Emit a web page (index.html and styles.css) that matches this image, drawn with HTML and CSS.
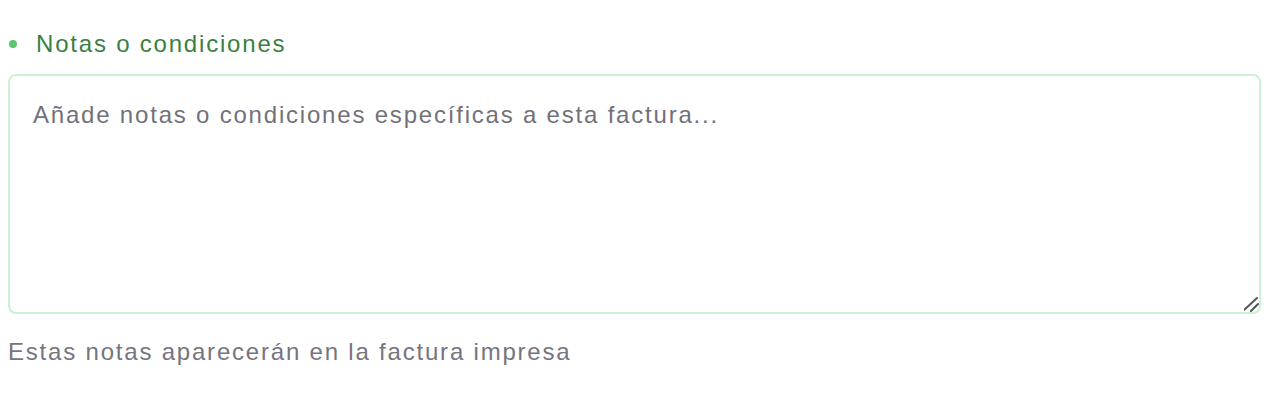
FILE: index.html
```html
<!DOCTYPE html>
<html lang="es">
<head>
<meta charset="utf-8">
<link rel="stylesheet" href="styles.css">
</head>
<body>
<div class="field">
  <label class="label" for="notes"><span class="dot"></span>Notas o condiciones</label>
  <textarea id="notes" class="notes" placeholder="Añade notas o condiciones específicas a esta factura..."></textarea>
  <p class="help">Estas notas aparecerán en la factura impresa</p>
</div>
</body>
</html>
```
FILE: styles.css
```css
html, body { background: #fff; }
body {
  margin: 0;
  padding: 28px 8px 0 8px;
  font-family: "Liberation Sans", Arial, sans-serif;
}
.field {
  display: flex;
  flex-direction: column;
  width: 1253px;
}
.label {
  display: flex;
  align-items: center;
  gap: 19px;
  font-size: 24px;
  line-height: 32px;
  letter-spacing: 1.8px;
  color: #3a7f40;
  padding-left: 1px;
}
.dot {
  width: 8px;
  height: 8px;
  border-radius: 50%;
  background: #5cc46c;
}
.notes {
  margin-top: 14px;
  height: 240px;
  box-sizing: border-box;
  border: 2px solid #c8f2d2;
  border-radius: 8px;
  padding: 23px 23px;
  font-family: "Liberation Sans", Arial, sans-serif;
  font-size: 24px;
  line-height: 32px;
  letter-spacing: 1.8px;
  color: #333;
  resize: vertical;
  outline: none;
}
.notes::placeholder { color: #72717b; }
.notes::-webkit-resizer {
  background: url("data:image/svg+xml,%3Csvg xmlns='http://www.w3.org/2000/svg' width='16' height='16' viewBox='0 0 16 16'%3E%3Cpath d='M1 14 L14 2 M8 15 L15 8' stroke='%23555' stroke-width='2' stroke-linecap='round' fill='none'/%3E%3C/svg%3E") no-repeat right bottom;
}
.help {
  margin: 22px 0 0 0;
  font-size: 24px;
  line-height: 32px;
  letter-spacing: 1.8px;
  color: #76747f;
}
```
